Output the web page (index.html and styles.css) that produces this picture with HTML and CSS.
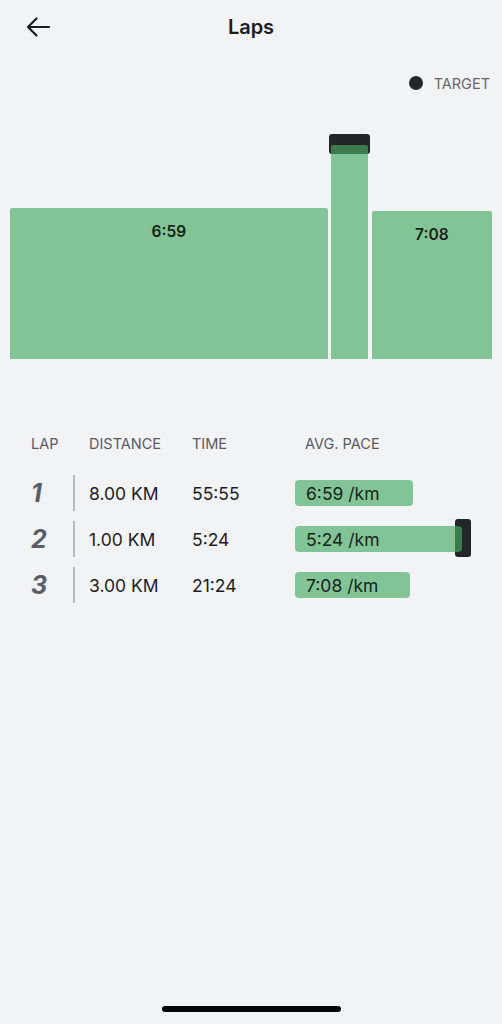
FILE: index.html
```html
<!DOCTYPE html>
<html lang="en">
<head>
<meta charset="utf-8">
<title>Laps</title>
<link rel="stylesheet" href="styles.css">
</head>
<body>
<div class="screen">
  <header class="topbar">
    <button class="back" aria-label="Back">
      <svg width="26" height="22" viewBox="0 0 26 22"><path d="M24 11H3M11.5 2.5L3 11l8.5 8.5" fill="none" stroke="#1b1c1e" stroke-width="2.2" stroke-linecap="round" stroke-linejoin="round"/></svg>
    </button>
    <h1 class="title">Laps</h1>
    <span></span>
  </header>

  <div class="legend">
    <span class="legend-dot"></span>
    <span class="legend-label">TARGET</span>
  </div>

  <div class="chart">
    <div class="bar" style="flex-grow:8.05;height:151px"><span class="bar-label">6:59</span></div>
    <div class="bar" style="flex-grow:0.94;height:214px"><span class="target"></span></div>
    <div class="bar" style="flex-grow:3.05;height:148px"><span class="bar-label">7:08</span></div>
  </div>

  <section class="laps">
    <div class="lap-head">
      <span class="h-lap">LAP</span>
      <span class="h-dist">DISTANCE</span>
      <span class="h-time">TIME</span>
      <span class="h-pace">AVG. PACE</span>
    </div>
    <div class="lap-row">
      <span class="lap-num">1</span>
      <span class="divider"></span>
      <span class="dist">8.00 KM</span>
      <span class="time">55:55</span>
      <div class="pace"><div class="pace-bar" style="width:118px">6:59 /km</div></div>
    </div>
    <div class="lap-row">
      <span class="lap-num">2</span>
      <span class="divider"></span>
      <span class="dist">1.00 KM</span>
      <span class="time">5:24</span>
      <div class="pace"><div class="pace-bar" style="width:167px">5:24 /km<span class="pace-target"></span></div></div>
    </div>
    <div class="lap-row">
      <span class="lap-num">3</span>
      <span class="divider"></span>
      <span class="dist">3.00 KM</span>
      <span class="time">21:24</span>
      <div class="pace"><div class="pace-bar" style="width:115px">7:08 /km</div></div>
    </div>
  </section>

  <div class="home-indicator"></div>
</div>
</body>
</html>
```

FILE: styles.css
```css
* { box-sizing: border-box; }
html, body { margin: 0; padding: 0; }
body {
  background: #f2f3f5;
  font-family: Inter, "Noto Sans", "Liberation Sans", sans-serif;
  color: #1c1d1f;
}
.screen {
  width: 502px;
  height: 1024px;
  display: flex;
  flex-direction: column;
  position: relative;
}
.topbar {
  height: 54px;
  display: grid;
  grid-template-columns: 1fr auto 1fr;
  align-items: center;
}
.back {
  justify-self: start;
  margin-left: 25px;
  padding: 0;
  border: 0;
  background: none;
  display: flex;
}
.title {
  margin: 0;
  font-size: 20px;
  font-weight: 600;
  color: #1b1c1e;
  letter-spacing: -0.1px;
}
.legend {
  margin-top: 18px;
  height: 22px;
  display: flex;
  justify-content: flex-end;
  align-items: center;
  gap: 11px;
  padding-right: 12px;
}
.legend-dot {
  width: 14px;
  height: 14px;
  border-radius: 50%;
  background: #23272b;
}
.legend-label {
  font-size: 14.5px;
  color: #62666d;
}
.chart {
  margin-top: 25px;
  height: 240px;
  padding: 0 10px;
  display: flex;
  align-items: flex-end;
  gap: 3.5px;
}
.bar {
  flex-basis: 0;
  background: #83c497;
  border-radius: 2px 2px 0 0;
  position: relative;
  display: flex;
  justify-content: center;
}
.bar-label {
  margin-top: 14px;
  font-size: 15.5px;
  font-weight: 600;
  color: #16231a;
}
.target {
  position: absolute;
  top: -11px;
  left: -2px;
  right: -2px;
  height: 20px;
  background: #22262b;
  border-radius: 3px;
}
.target::after {
  content: "";
  position: absolute;
  left: 2px;
  right: 2px;
  top: 11px;
  bottom: 0;
  background: #3d7b4f;
  border-radius: 2px 2px 0 0;
}
.laps {
  margin-top: 74px;
  padding-left: 31px;
}
.lap-head {
  height: 20px;
  display: flex;
  align-items: center;
  font-size: 14.5px;
  color: #575b62;
  margin-bottom: 17px;
}
.h-lap { width: 58px; }
.h-dist { width: 103px; }
.h-time { width: 113px; }
.lap-row {
  height: 46px;
  display: flex;
  align-items: center;
}
.lap-num {
  width: 42px;
  font-size: 25px;
  font-weight: 700;
  font-style: italic;
  color: #5a5e66;
}
.divider {
  width: 2px;
  height: 36px;
  background: #b7bac0;
  margin-right: 14px;
}
.dist, .time {
  width: 103px;
  font-size: 17.5px;
  color: #1c1d1f;
}
.pace { flex: 1; }
.pace-bar {
  height: 26px;
  background: #83c497;
  border-radius: 4px;
  padding-left: 11px;
  display: flex;
  align-items: center;
  font-size: 17.5px;
  color: #17231b;
  position: relative;
}
.pace-target {
  position: absolute;
  left: 160px;
  top: -7px;
  width: 16px;
  height: 38px;
  background: #22262b;
  border-radius: 3px;
}
.pace-target::after {
  content: "";
  position: absolute;
  left: 0;
  top: 7px;
  width: 7px;
  height: 26px;
  background: #3d7b4f;
  border-radius: 0 4px 4px 0;
}
.home-indicator {
  position: absolute;
  left: 162px;
  bottom: 12px;
  width: 179px;
  height: 6px;
  border-radius: 3px;
  background: #050505;
}
```
